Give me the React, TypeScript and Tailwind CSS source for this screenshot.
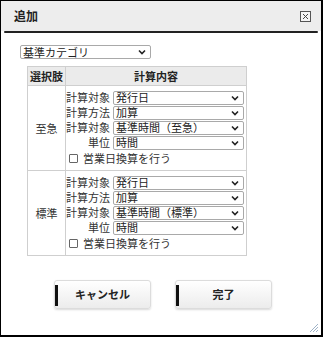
import React from "react";

const font = { fontFamily: '"Noto Sans CJK JP", "Noto Sans", sans-serif' };

function Chevron() {
  return (
    <svg width="8" height="6" viewBox="0 0 8 6" className="shrink-0">
      <polyline points="1,1.5 4,4.5 7,1.5" fill="none" stroke="#222" strokeWidth="1.6" />
    </svg>
  );
}

function Sel({ label, w }: { label: string; w: string }) {
  return (
    <div
      className={`${w} h-[14px] border border-[#a9a9a9] rounded-[2px] bg-white flex items-center justify-between pl-[2px] pr-[4px] text-[11px] leading-none text-[#222]`}
    >
      <span className="whitespace-nowrap">{label}</span>
      <Chevron />
    </div>
  );
}

function Line({ label, value }: { label: string; value: string }) {
  return (
    <div className="flex items-center h-[15px]">
      <div className="w-[47px] text-right pr-[3px] text-[11px] leading-none text-[#333] whitespace-nowrap">{label}</div>
      <Sel label={value} w="w-[131px]" />
    </div>
  );
}

function Group({ name, base }: { name: string; base: string }) {
  return (
    <div className="flex h-[85px] border-t border-[#cfcfcf]">
      <div className="w-[38px] border-r border-[#cfcfcf] flex items-center justify-center text-[11px] text-[#333]">
        {name}
      </div>
      <div className="flex-1 pt-[4px] flex flex-col">
        <Line label="計算対象" value="発行日" />
        <Line label="計算方法" value="加算" />
        <Line label="計算対象" value={base} />
        <Line label="単位" value="時間" />
        <div className="flex items-center h-[16px] pl-[3px]">
          <div className="w-[9px] h-[9px] border border-[#666] rounded-[1px] bg-white" />
          <span className="ml-[5px] text-[11px] leading-none text-[#333] whitespace-nowrap">営業日換算を行う</span>
        </div>
      </div>
    </div>
  );
}

function Btn({ label }: { label: string }) {
  return (
    <div className="relative w-[97px] h-[29px] rounded-[3px] border border-[#dcdcdc] bg-gradient-to-b from-white to-[#ececec] shadow-[0_1px_2px_rgba(0,0,0,0.15)] flex items-center justify-center">
      <div className="absolute left-0 top-[4px] w-[3px] h-[21px] bg-[#111]" />
      <span className="text-[11px] font-bold text-[#222] leading-none">{label}</span>
    </div>
  );
}

export default function App() {
  return (
    <div style={font} className="w-[323px] h-[337px] bg-white border-l border-t border-r-2 border-b-2 border-black flex flex-col relative overflow-hidden">
      <div className="h-[30px] bg-[#ededed] flex items-center justify-between pl-[13px] pr-[10px]">
        <span className="text-[12px] font-bold text-[#222] leading-none">追加</span>
        <svg width="11" height="11" viewBox="0 0 11 11">
          <rect x="0.5" y="0.5" width="10" height="10" fill="#f4f4f4" stroke="#555" />
          <line x1="3" y1="3" x2="8" y2="8" stroke="#444" strokeWidth="1" />
          <line x1="8" y1="3" x2="3" y2="8" stroke="#444" strokeWidth="1" />
        </svg>
      </div>
      <div className="mx-[3px] h-[2px] bg-[#222] rounded-full" />
      <div className="pl-[19px] pt-[12px]">
        <Sel label="基準カテゴリ" w="w-[131px]" />
        <div className="ml-[7px] mt-[7px] w-[220px] border border-[#cfcfcf] border-t-[#cfcfcf]">
          <div className="flex h-[18px] bg-[#ebebeb]">
            <div className="w-[38px] border-r border-[#cfcfcf] flex items-center justify-center text-[11px] font-bold text-[#222]">
              選択肢
            </div>
            <div className="flex-1 flex items-center justify-center text-[11px] font-bold text-[#222]">計算内容</div>
          </div>
          <Group name="至急" base="基準時間（至急）" />
          <Group name="標準" base="基準時間（標準）" />
        </div>
        <div className="flex gap-[24px] ml-[34px] mt-[24px]">
          <Btn label="キャンセル" />
          <Btn label="完了" />
        </div>
      </div>
      <svg width="11" height="11" viewBox="0 0 11 11" className="absolute right-[2px] bottom-[2px]">
        <line x1="10" y1="2" x2="2" y2="10" stroke="#9fb3c8" strokeWidth="1" />
        <line x1="10" y1="5" x2="5" y2="10" stroke="#9fb3c8" strokeWidth="1" />
        <line x1="10" y1="8" x2="8" y2="10" stroke="#9fb3c8" strokeWidth="1" />
      </svg>
    </div>
  );
}
